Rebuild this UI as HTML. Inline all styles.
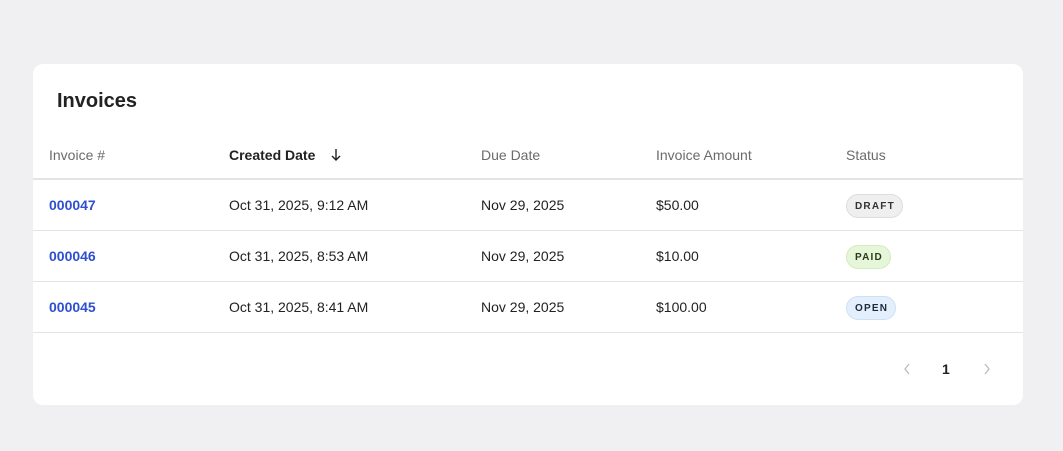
<!DOCTYPE html>
<html><head><style>
*{box-sizing:border-box;margin:0;padding:0}
body{width:1063px;height:451px;background:#f0f0f2;font-family:"Liberation Sans",sans-serif;position:relative;overflow:hidden}
.card{position:absolute;left:33px;top:64px;width:990px;height:341px;background:#fff;border-radius:10px}
h1{position:absolute;left:24px;top:26px;font-size:20px;font-weight:bold;color:#222}
.c{position:absolute;font-size:14px;color:#222;white-space:nowrap}
.h{color:#6b6b6b}
.line{position:absolute;left:0;width:990px;background:#e4e4e6}
.link{color:#2f4fcf;font-weight:bold}
.b{position:absolute;height:24px;border-radius:12px;font-size:10px;font-weight:bold;letter-spacing:1.2px;line-height:24px;padding:0 7px 0 8px;border:1px solid}
</style></head><body>
<div class="card">
<h1>Invoices</h1>
<div class="c h" style="left:16px;top:83px">Invoice #</div>
<div class="c" style="left:196px;top:83px;font-weight:bold">Created Date</div>
<svg style="position:absolute;left:297px;top:83px" width="12" height="16" viewBox="0 0 12 16"><path d="M6 2v11M2 9l4 4 4-4" fill="none" stroke="#222" stroke-width="1.4"/></svg>
<div class="c h" style="left:448px;top:83px">Due Date</div>
<div class="c h" style="left:623px;top:83px">Invoice Amount</div>
<div class="c h" style="left:813px;top:83px">Status</div>
<div class="line" style="top:114px;height:2px"></div>

<div class="c link" style="left:16px;top:133px">000047</div>
<div class="c" style="left:196px;top:133px">Oct 31, 2025, 9:12 AM</div>
<div class="c" style="left:448px;top:133px">Nov 29, 2025</div>
<div class="c" style="left:623px;top:133px">$50.00</div>
<div class="b" style="left:813px;top:130px;background:#efefef;border-color:#ddd;color:#333">DRAFT</div>
<div class="line" style="top:166px;height:1px"></div>

<div class="c link" style="left:16px;top:184px">000046</div>
<div class="c" style="left:196px;top:184px">Oct 31, 2025, 8:53 AM</div>
<div class="c" style="left:448px;top:184px">Nov 29, 2025</div>
<div class="c" style="left:623px;top:184px">$10.00</div>
<div class="b" style="left:813px;top:181px;background:#e6f6d8;border-color:#d3ecc0;color:#2a3a1a">PAID</div>
<div class="line" style="top:217px;height:1px"></div>

<div class="c link" style="left:16px;top:235px">000045</div>
<div class="c" style="left:196px;top:235px">Oct 31, 2025, 8:41 AM</div>
<div class="c" style="left:448px;top:235px">Nov 29, 2025</div>
<div class="c" style="left:623px;top:235px">$100.00</div>
<div class="b" style="left:813px;top:232px;background:#e3effc;border-color:#cfe0f4;color:#1e2a3a">OPEN</div>
<div class="line" style="top:268px;height:1px"></div>

<svg style="position:absolute;left:870px;top:299px" width="8" height="12" viewBox="0 0 8 12"><path d="M6 1L2 6l4 5" fill="none" stroke="#bbb" stroke-width="1.3"/></svg>
<div class="c" style="left:909px;top:297px;font-weight:bold">1</div>
<svg style="position:absolute;left:950px;top:299px" width="8" height="12" viewBox="0 0 8 12"><path d="M2 1l4 5-4 5" fill="none" stroke="#bbb" stroke-width="1.3"/></svg>
</div>
</body></html>
